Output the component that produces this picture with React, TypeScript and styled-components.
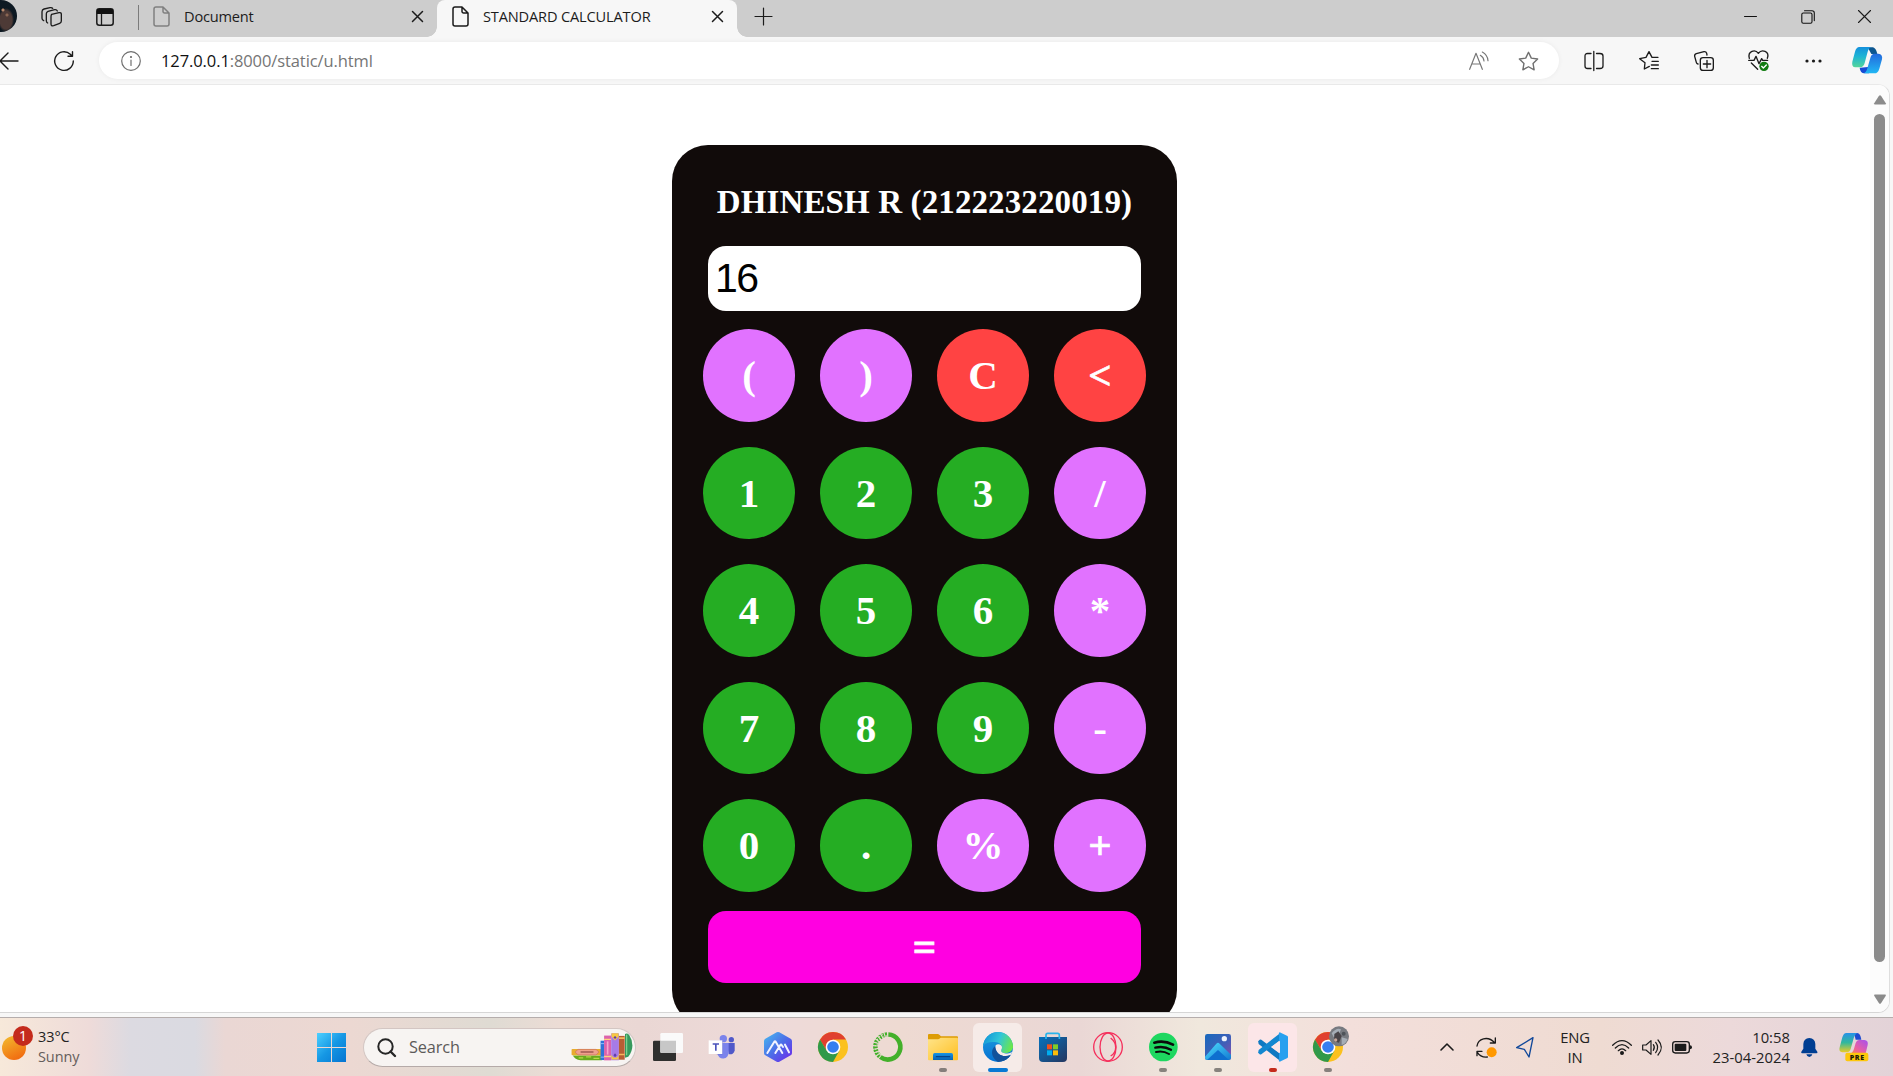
import React from "react";
import styled, { createGlobalStyle } from "styled-components";

const GlobalStyle = createGlobalStyle`
  *, *::before, *::after { box-sizing: border-box; }
  html, body { margin: 0; padding: 0; overflow: hidden; }
  svg { display: block; flex: none; overflow: visible; }
`;

const UI_FONT = `"Open Sans", "Noto Sans", sans-serif`;
const SERIF = `"Liberation Serif", "Times New Roman", serif`;

const Screen = styled.div`
  width: 1893px;
  height: 1076px;
  overflow: hidden;
  display: flex;
  flex-direction: column;
  background: #f7f7f7;
  font-family: ${UI_FONT};
`;

/* ---------- tab strip ---------- */
const TabStrip = styled.div`
  height: 37px;
  flex: none;
  display: flex;
  align-items: stretch;
  background: #cdcdcd;
`;

const Slot = styled.div<{ $w: number; $start?: boolean }>`
  width: ${(p) => p.$w}px;
  flex: none;
  display: flex;
  align-items: center;
  justify-content: ${(p) => (p.$start ? "flex-start" : "center")};
`;

const StripSlot = styled(Slot)`
  padding-bottom: 4px;
`;

const Avatar = styled.div`
  width: 32px;
  height: 32px;
  margin-left: -15px;
  flex: none;
  border-radius: 50%;
  background: radial-gradient(circle at 18px 10px, #b98a6c 0 1px, transparent 2px),
    radial-gradient(circle at 22px 15px, #8a6552 0 1px, transparent 2px),
    radial-gradient(ellipse 10px 15px at 21px 20px, #4d3a36 0 60%, transparent 80%),
    linear-gradient(#0e1a24, #0b1720);
`;

const Separator = styled.div`
  width: 1px;
  height: 25px;
  margin: 5px 14px 0 15px;
  background: #7b7b7b;
`;

const Tab = styled.div<{ $active?: boolean; $w: number }>`
  position: relative;
  width: ${(p) => p.$w}px;
  flex: none;
  display: flex;
  align-items: center;
  padding: 0 14px 4px ${(p) => (p.$active ? 15 : 0)}px;
  background: ${(p) => (p.$active ? "#f7f7f7" : "transparent")};
  border-radius: ${(p) => (p.$active ? "8px 8px 0 0" : "0")};
`;

const TabCorner = styled.span<{ $side: "left" | "right" }>`
  position: absolute;
  bottom: 0;
  ${(p) => p.$side}: -10px;
  width: 10px;
  height: 10px;
  background: radial-gradient(circle at ${(p) => (p.$side === "left" ? "0 0" : "10px 0")}, transparent 9.5px, #f7f7f7 10px);
`;

const TabTitle = styled.span<{ $ls: number }>`
  margin-left: 14px;
  padding-bottom: 2px;
  flex: 1;
  font-size: 14.6px;
  letter-spacing: ${(p) => p.$ls}px;
  white-space: nowrap;
  color: #1c1c1c;
`;

const Spacer = styled.div`
  flex: 1;
`;

/* ---------- toolbar ---------- */
const Toolbar = styled.div`
  height: 47px;
  flex: none;
  display: flex;
  align-items: center;
`;

const AddressBar = styled.div`
  width: 1460px;
  height: 37px;
  flex: none;
  display: flex;
  align-items: center;
  padding-left: 22px;
  padding-right: 7px;
  border-radius: 19px;
  background: #fff;
  box-shadow: 0 0 5px rgba(0, 0, 0, 0.06);
`;

const Url = styled.span`
  margin-left: 20px;
  font-size: 16.5px;
  letter-spacing: -0.1px;
  color: #757575;
  b {
    font-weight: 400;
    color: #111;
  }
`;

/* ---------- page ---------- */
const Viewport = styled.div`
  height: 929px;
  width: 1890px;
  flex: none;
  overflow: hidden;
  display: flex;
  background: #fff;
  border-top: 1px solid #e9e9e9;
  border-right: 1px solid #dedede;
  border-bottom: 1px solid #d6d6d6;
  border-radius: 0 12px 12px 0;
`;

const Page = styled.main`
  width: 1870px;
  flex: none;
  padding: 60px 0 0 672px;
`;

const Calculator = styled.section`
  width: 505px;
  height: 881px;
  padding: 38px 30px 0;
  border-radius: 36px;
  background: #110b0a;
  display: flex;
  flex-direction: column;
  align-items: center;
`;

const Heading = styled.h1`
  margin: 0;
  height: 38px;
  font: bold 33px/38px ${SERIF};
  letter-spacing: 0.12px;
  color: #fff;
  white-space: nowrap;
`;

const Display = styled.div`
  width: 433px;
  height: 65px;
  margin-top: 25px;
  padding-left: 7px;
  border-radius: 18px;
  background: #fff;
  font: 41px/65px "Liberation Sans", Arial, sans-serif;
  letter-spacing: -1.5px;
  color: #000;
`;

const Keys = styled.div`
  margin-top: 18px;
  display: grid;
  grid-template-columns: repeat(4, 92px);
  grid-auto-rows: 92.75px;
  gap: 24.75px 25px;
`;

const COLORS = { digit: "#25ad23", op: "#e172ff", edit: "#ff4343" };

const Key = styled.button<{ $kind: keyof typeof COLORS; $heavy?: boolean }>`
  border: 0;
  padding: 0;
  border-radius: 50%;
  background: ${(p) => COLORS[p.$kind]};
  color: #fff;
  font: bold 41px/92.75px ${SERIF};
  -webkit-text-stroke: ${(p) => (p.$heavy ? "0.6px #fff" : "0")};
`;

const EqualsKey = styled.button`
  width: 433px;
  height: 72px;
  margin-top: 19px;
  padding: 0;
  border: 0;
  border-radius: 18px;
  background: #ff00e1;
  color: #fff;
  font: bold 41px/72px ${SERIF};
  -webkit-text-stroke: 0.8px #fff;
`;

const Scrollbar = styled.div`
  width: 19px;
  flex: none;
  display: flex;
  flex-direction: column;
  align-items: center;
  padding: 10px 0 8px;
  background: #fcfcfc;
`;

const Thumb = styled.div`
  width: 11px;
  height: 848px;
  margin: 9px 0 auto;
  border-radius: 6px;
  background: #8b8b8b;
`;

/* ---------- taskbar ---------- */
const Taskbar = styled.footer`
  height: 59px;
  margin-top: 4px;
  flex: none;
  display: flex;
  align-items: center;
  border-top: 1px solid #b5adac;
  background: linear-gradient(90deg, #f7e9da 0, #eedbd9 90px, #dcdae1 130px, #dadae1 195px, #ead7d4 225px,
    #ecd8d2 350px, #dfdbd3 490px, #ecdcd5 560px, #ead7d4 640px, #eedad9 780px, #eedad2 900px, #ead7d5 1080px,
    #f0e8dd 1200px, #f3dfdb 1350px, #efdbd2 1600px, #ecd9da 1730px, #e3d3d8 1893px);
`;

const Weather = styled.div`
  width: 299px;
  flex: none;
  display: flex;
  align-items: center;
  gap: 4px;
`;

const WeatherText = styled.div`
  font-size: 14.5px;
  line-height: 20px;
  letter-spacing: -0.1px;
  color: #222;
  div + div {
    color: #655d5b;
  }
`;

const SearchBox = styled.div`
  width: 273px;
  height: 39px;
  margin: 0 4px 0 0;
  flex: none;
  display: flex;
  align-items: center;
  padding: 0 2px 0 13px;
  border: 1px solid #d3c6c3;
  border-bottom-color: #b5aaa8;
  border-radius: 20px;
  background: #f7f4f2;
`;

const SearchLabel = styled.span`
  margin-left: 13px;
  flex: 1;
  font-size: 16.3px;
  letter-spacing: -0.1px;
  color: #5c5a59;
`;

const AppTile = styled.div<{ $bg?: string }>`
  position: relative;
  width: 49px;
  height: 49px;
  margin: 0 3px;
  flex: none;
  display: flex;
  align-items: center;
  justify-content: center;
  border-radius: 6px;
  background: ${(p) => p.$bg ?? "transparent"};
`;

const Indicator = styled.i<{ $w: number; $c: string }>`
  position: absolute;
  bottom: 0;
  left: calc(50% - ${(p) => p.$w / 2}px);
  width: ${(p) => p.$w}px;
  height: 4px;
  border-radius: 2px;
  background: ${(p) => p.$c};
`;

const Language = styled.div`
  width: 64px;
  flex: none;
  text-align: center;
  font-size: 14.8px;
  line-height: 20px;
  letter-spacing: -0.2px;
  color: #222;
`;

const Clock = styled.div`
  width: 93px;
  flex: none;
  text-align: right;
  font-size: 14.8px;
  line-height: 20px;
  letter-spacing: 0.02px;
  color: #222;
  white-space: nowrap;
`;

const stroke = (c = "#1b1b1b", w = 1.3) => ({
  fill: "none",
  stroke: c,
  strokeWidth: w,
  strokeLinecap: "round" as const,
  strokeLinejoin: "round" as const,
});

const DocIcon = ({ color }: { color: string }) => (
  <svg width="17" height="21" viewBox="0 0 17 21" {...stroke(color, 1.5)}>
    <path d="M3 1h7l6 6v11a2 2 0 0 1-2 2H3a2 2 0 0 1-2-2V3a2 2 0 0 1 2-2zM10 1v4.500a1.500 1.500 0 0 0 1.500 1.500H16" />
  </svg>
);

const Cross = ({ s = 11, w = 1.5 }: { s?: number; w?: number }) => (
  <svg width={s} height={s} viewBox={`0 0 ${s} ${s}`} {...stroke("#1b1b1b", w)}>
    <path d={`M.5 .5L${s - 0.5} ${s - 0.5}M${s - 0.5} .5L.5 ${s - 0.5}`} />
  </svg>
);

const TeamsIcon = () => (
  <svg width="30" height="30" viewBox="0 0 90 90">
    <circle cx="70" cy="23" r="8" fill="#5059c9" />
    <path d="M56 33h24v22a13 13 0 0 1-18 11z" fill="#5059c9" />
    <circle cx="46" cy="20" r="11" fill="#7b83eb" />
    <path d="M26 33h36v28a17 17 0 0 1-34 3z" fill="#7b83eb" />
    <path d="M6 26h38v41H28L26 67z" fill="#4a52b5" opacity=".6" />
    <rect x="2" y="25" width="41" height="41" fill="#fff" />
    <path d="M14 36h19M23.500 36v20" stroke="#4b53bc" strokeWidth="5" />
  </svg>
);

const HexIcon = () => (
  <svg width="30" height="30" viewBox="0 0 90 90">
    <defs>
      <linearGradient id="hex" x1="0" y1="0" x2="1" y2="1">
        <stop offset="0" stopColor="#46bdf0" />
        <stop offset=".5" stopColor="#4c6ee8" />
        <stop offset="1" stopColor="#7024ea" />
      </linearGradient>
    </defs>
    <path d="M41 1q4-2 8 0l34 19q4 2 4 7v36q0 5-4 7L49 89q-4 2-8 0L7 70q-4-2-4-7V27q0-5 4-7z" fill="url(#hex)" />
    <path d="M13 63L34 29q2-3 4 0l20 34M37 63l15-24q2-3 4 0l4 6M66 38l12 23" {...stroke("#f1f3ff", 6)} />
  </svg>
);

const ChromeIcon = ({ badge }: { badge?: boolean }) => (
  <svg width="30" height="30" viewBox="0 0 90 90">
    <circle cx="45" cy="45" r="45" fill="#fbc11e" />
    <path d="M6 23A45 45 0 0 1 84 22.500H45L26 56z" fill="#e0402f" />
    <path d="M6 22.500A45 45 0 0 0 45 90L64 56 45 45 26 56z" fill="#30994a" />
    <circle cx="45" cy="45" r="22" fill="#fff" />
    <circle cx="45" cy="45" r="17.500" fill="#357ef0" />
    {badge && (
      <g>
        <circle cx="78" cy="13" r="30" fill="#777a80" />
        <path d="M56 4q14-18 28-12l-6 16-16 8zM86 16l18 5q-6 16-18 18z" fill="#a5adb6" />
        <path d="M64 6l12-8 10 14-8 20-15-4z" fill="#494448" />
        <circle cx="68" cy="24" r="5" fill="#c5a69b" />
        <circle cx="92" cy="5" r="6" fill="#4e5359" />
      </g>
    )}
  </svg>
);

const AnacondaIcon = () => (
  <svg width="30" height="30" viewBox="0 0 90 90" fill="none" stroke="#43b02a">
    <path d="M46 7.500A37.500 37.500 0 1 1 22 75" strokeWidth="14" />
    <path d="M20 73A37.500 37.500 0 0 1 43 7.500" strokeWidth="14" strokeDasharray="6 3" />
    <path d="M23 69A33 33 0 0 1 42 12" strokeWidth="4" stroke="#eedad8" strokeDasharray="4 6" />
    <path d="M12 62A40 40 0 0 1 30 7" strokeWidth="4" stroke="#eedad8" strokeDasharray="3 7" />
  </svg>
);

const FolderIcon = () => (
  <svg width="30" height="30" viewBox="0 0 90 90">
    <defs>
      <linearGradient id="fold" x1="0" y1="0" x2="1" y2="1">
        <stop offset="0" stopColor="#ffe48a" />
        <stop offset="1" stopColor="#ffbf21" />
      </linearGradient>
      <linearGradient id="foldb" x1="0" y1="0" x2="0" y2="1">
        <stop offset="0" stopColor="#1894e5" />
        <stop offset="1" stopColor="#0863b2" />
      </linearGradient>
    </defs>
    <path d="M0 9q0-3 3-3h26q3 0 5 2l5 5h48q3 0 3 4v17H0z" fill="#dd9c05" />
    <path d="M0 22h30q3 0 6-3l2-2h49q3 0 3 3v62q0 3-3 3H3q-3 0-3-3z" fill="url(#fold)" />
    <path d="M15 84V68q0-5 5-5h50q5 0 5 5v16z" fill="url(#foldb)" />
    <path d="M25 74h40" stroke="#06458a" strokeWidth="4" strokeLinecap="round" />
  </svg>
);

const EdgeIcon = () => (
  <svg width="30" height="30" viewBox="0 0 90 90">
    <defs>
      <linearGradient id="eg1" x1="0" y1=".3" x2="1" y2=".6">
        <stop offset="0" stopColor="#1296d8" />
        <stop offset=".5" stopColor="#31c6d8" />
        <stop offset="1" stopColor="#6de846" />
      </linearGradient>
      <linearGradient id="eg2" x1="0" y1="0" x2="0" y2="1">
        <stop offset="0" stopColor="#1c9cde" />
        <stop offset="1" stopColor="#0671d2" />
      </linearGradient>
      <clipPath id="egc"><circle cx="45" cy="45" r="45" /></clipPath>
    </defs>
    <g clipPath="url(#egc)">
      <rect width="90" height="90" fill="url(#eg2)" />
      <path d="M36 43C20 55 26 84 52 92h44V66c-14 8-34 6-43-4-8-8-10-14-17-19z" fill="#12529b" />
      <path d="M0 36C6 8 28 0 45 0c27 0 46 20 46 40 0 14-11 23-24 23-10 0-15-4-12-9 7-12-4-23-20-24C20 29 6 32 0 42z" fill="url(#eg1)" />
      <path d="M38 40c7-7 20-2 19 7-1 6-5 9 0 14 6 5 18 5 33-2v10l-8 1c-14 5-30 2-38-8-6-7-8-15-6-22z" fill="#f6ebe9" />
      <path d="M38 40c-3 9 0 19 8 25 10 8 24 9 38 3l-4 10-24 4-22-20z" fill="#12529b" />
    </g>
  </svg>
);

const StoreIcon = () => (
  <svg width="30" height="30" viewBox="0 0 90 90">
    <defs>
      <linearGradient id="store" x1="0" y1="0" x2="1" y2="1">
        <stop offset="0" stopColor="#0672bd" />
        <stop offset="1" stopColor="#25365f" />
      </linearGradient>
    </defs>
    <path d="M24 22V9q0-5 5-5h30q5 0 5 5v13" fill="none" stroke="#28b4eb" strokeWidth="5" />
    <path d="M3 15h84v63q0 12-12 12H15Q3 90 3 78z" fill="url(#store)" />
    <path d="M24 14v7M64 14v7" stroke="#28b4eb" strokeWidth="5" />
    <path d="M27 37h15v15H27z" fill="#f1511b" />
    <path d="M45 37h15v15H45z" fill="#80cc28" />
    <path d="M27 55h15v15H27z" fill="#00adef" />
    <path d="M45 55h15v15H45z" fill="#fbbc09" />
  </svg>
);

const OperaIcon = () => (
  <svg width="30" height="30" viewBox="0 0 90 90" fill="none" stroke="#f5305c" strokeWidth="4">
    <circle cx="45" cy="45" r="43" />
    <ellipse cx="45" cy="45" rx="24" ry="42" />
    <path d="M53 18c20 16 20 41 0 54" />
  </svg>
);

const SpotifyIcon = () => (
  <svg width="30" height="30" viewBox="0 0 90 90">
    <circle cx="46" cy="45" r="43" fill="#1ed760" />
    <g {...stroke("#0b0b0b", 7)}>
      <path d="M19 32q29-8 56 6" strokeWidth="8" />
      <path d="M22 47q25-6 47 6" />
      <path d="M24 60q21-5 39 6" strokeWidth="6" />
    </g>
  </svg>
);

const PhotosIcon = () => (
  <svg width="30" height="30" viewBox="0 0 90 90">
    <defs>
      <linearGradient id="ph" x1="0" y1="0" x2="1" y2="1">
        <stop offset="0" stopColor="#1769bd" />
        <stop offset=".55" stopColor="#3f5fb8" />
        <stop offset="1" stopColor="#8c4cac" />
      </linearGradient>
      <linearGradient id="ph2" x1="0" y1="0" x2="1" y2="1">
        <stop offset="0" stopColor="#4edfff" />
        <stop offset="1" stopColor="#0e72ce" />
      </linearGradient>
      <clipPath id="phc"><rect x="6" y="6" width="78" height="78" rx="7" /></clipPath>
    </defs>
    <g clipPath="url(#phc)">
      <rect x="6" y="6" width="78" height="78" fill="url(#ph)" />
      <path d="M6 74L40 35q5-5 10 0l36 35v20H6z" fill="url(#ph2)" />
      <path d="M12 84l33-30 33 30z" fill="#0e6fcf" />
    </g>
    <circle cx="64" cy="20" r="8" fill="#eef2fb" />
  </svg>
);

const CodeIcon = () => (
  <svg width="30" height="30" viewBox="0 0 90 90">
    <path d="M1 31q-2-3 1-5l3-3q2-1 5 0l58 44v21L2 36z" fill="#0f79c2" />
    <path d="M1 59q-2 3 1 5l3 3q2 1 5 0l58-44V2L2 54z" fill="#1387d0" />
    <path d="M65 1l22 10q3 1 3 5v58q0 4-3 5L65 89q-4-1-2-6V7q-2-4 2-6z" fill="#27a0ef" />
    <path d="M66 26v38L40 45z" fill="#fce6e8" />
  </svg>
);

const TaskViewIcon = () => (
  <svg width="30" height="30" viewBox="0 0 90 90">
    <rect x="0" y="26" width="69" height="61" rx="4" fill="#2f2f2e" />
    <rect x="22" y="3" width="68" height="60" rx="4" fill="#fafafa" />
    <path d="M22 26h47v37H26q-4 0-4-4z" fill="#c7c7c7" />
  </svg>
);

const BooksIcon = () => (
  <svg width="62" height="28" viewBox="0 0 189 87">
    <path d="M4 70h90v15H28Q10 82 4 70z" fill="#69a91e" />
    <path d="M22 77h14M45 74h16M68 79h18" stroke="#b7d947" strokeWidth="4" />
    <rect x="0" y="50" width="92" height="19" rx="2" fill="#e8ac2f" />
    <path d="M20 51h56l9 8-9 9H20l-9-9z" fill="#efa08c" stroke="#ca6d5d" strokeWidth="2" />
    <path d="M28 59h40" stroke="#a65c55" strokeWidth="5" />
    <rect x="90" y="24" width="12" height="60" fill="#2f73d7" />
    <path d="M90 33h12M90 75h12" stroke="#8dc0ff" strokeWidth="3" />
    <rect x="101" y="8" width="22" height="77" fill="#dc62ac" />
    <path d="M101 20h22M101 73h22" stroke="#ffd37d" strokeWidth="4" />
    <path d="M112 26v41" stroke="#f6a6cf" strokeWidth="5" />
    <rect x="123" y="1" width="24" height="84" rx="2" fill="#a67be7" />
    <path d="M124 1h22v10l-11 12-11-12zM124 82V67l5 9h12l5-9v15z" fill="#f7c842" />
    <path d="M135 9l5 5-5 5-5-5zM135 63l5 6-5 6-5-6z" fill="#613da9" />
    <rect x="147" y="9" width="18" height="74" fill="#b85d34" />
    <path d="M147 16h18M147 67h18" stroke="#f4b85c" strokeWidth="5" />
    <path d="M166 3q6-4 13 3 10 15 10 33 0 19-13 35l-10 3z" fill="#369a5d" />
    <path d="M171 5v64" stroke="#7bd090" strokeWidth="4" />
  </svg>
);

const CopilotIcon = () => (
  <svg width="30" height="27" viewBox="0 0 90 81">
    <defs>
      <linearGradient id="cpa" x1="0" y1="0" x2="0" y2="1">
        <stop offset="0" stopColor="#1590dc" />
        <stop offset=".45" stopColor="#1db4d5" />
        <stop offset="1" stopColor="#55d69a" />
      </linearGradient>
      <linearGradient id="cpb" x1="0" y1="0" x2="0" y2="1">
        <stop offset="0" stopColor="#2369dc" />
        <stop offset="1" stopColor="#21b7f4" />
      </linearGradient>
    </defs>
    <path d="M47 1h16q9 2 13 20H58z" fill="#0d568f" />
    <path d="M25 62l23-2 3 19H37q-12 0-14-17z" fill="#164bd4" />
    <path d="M22 0h36q-8 2-12 18l-8 30q-3 12-13 13H10Q-2 60 1 44L9 14Q13 0 22 0z" fill="url(#cpa)" />
    <path d="M66 20h13q14 2 11 17l-8 28q-4 14-15 14H34q9-1 12-15l9-31q3-12 11-13z" fill="url(#cpb)" />
  </svg>
);

const CopilotPreIcon = () => (
  <svg width="30" height="29" viewBox="0 0 90 87">
    <defs>
      <linearGradient id="pa" x1="0" y1="0" x2="0" y2="1">
        <stop offset="0" stopColor="#2792e8" />
        <stop offset=".5" stopColor="#32b89c" />
        <stop offset="1" stopColor="#edcc25" />
      </linearGradient>
      <linearGradient id="pb" x1="1" y1="0" x2="0" y2="1">
        <stop offset="0" stopColor="#a551f0" />
        <stop offset=".6" stopColor="#e85fa4" />
        <stop offset="1" stopColor="#f78258" />
      </linearGradient>
    </defs>
    <path d="M45 0h10q9 1 12 20H50z" fill="#1e4bd1" />
    <path d="M22 0h34q-8 2-12 16l-9 32q-3 10-12 10H10Q-2 57 2 43l8-30Q14 0 22 0z" fill="url(#pa)" />
    <path d="M60 21h16q13 2 10 15l-6 25H34q7-1 11-14l5-17q3-9 10-9z" fill="url(#pb)" />
    <rect x="19" y="59" width="69" height="26" rx="6" fill="#fdc70b" />
    <text x="54.500" y="79.500" textAnchor="middle" fontFamily="Open Sans" fontWeight="800" fontSize="21" letterSpacing="2" fill="#201a08">PRE</text>
  </svg>
);

const KEYS: [string, keyof typeof COLORS][] = [
  ["(", "op"], [")", "op"], ["C", "edit"], ["<", "edit"],
  ["1", "digit"], ["2", "digit"], ["3", "digit"], ["/", "op"],
  ["4", "digit"], ["5", "digit"], ["6", "digit"], ["*", "op"],
  ["7", "digit"], ["8", "digit"], ["9", "digit"], ["-", "op"],
  ["0", "digit"], [".", "digit"], ["%", "op"], ["+", "op"],
];

const APPS: { icon: React.ReactNode; bg?: string; dot?: [number, string] }[] = [
  { icon: <TaskViewIcon /> },
  { icon: <TeamsIcon /> },
  { icon: <HexIcon /> },
  { icon: <ChromeIcon /> },
  { icon: <AnacondaIcon /> },
  { icon: <FolderIcon />, dot: [8, "#857e7b"] },
  { icon: <EdgeIcon />, bg: "#f6ebe8", dot: [20, "#0879d4"] },
  { icon: <StoreIcon /> },
  { icon: <OperaIcon /> },
  { icon: <SpotifyIcon />, dot: [8, "#87827d"] },
  { icon: <PhotosIcon />, dot: [8, "#87827d"] },
  { icon: <CodeIcon />, bg: "#fce6e8", dot: [8, "#c42b1c"] },
  { icon: <ChromeIcon badge />, dot: [8, "#87807d"] },
];

const BrowserTabs = () => (
  <TabStrip>
    <Avatar />
    <StripSlot $w={69}>
      <svg width="22" height="20" viewBox="0 0 66 60" {...stroke("#1b1b1b", 4)}>
        <path d="M32 22l22-5q7-1 7 5v20q0 5-5 7l-18 7q-8 2-8-5V29q0-5 2-7z" />
        <path d="M20 48q-4-2-4-7V20q0-5 5-7l20-5q6-1 8 4M8 41q-5-2-5-7V14q0-6 6-8l18-4q6-1 8 2" />
      </svg>
    </StripSlot>
    <StripSlot $w={37}>
      <svg width="18" height="18" viewBox="0 0 18 18">
        <rect x=".8" y=".8" width="16.400" height="16.400" rx="2.500" {...stroke("#1b1b1b", 1.5)} />
        <path d="M1 1h16v5H1z" fill="#111" />
        <path d="M5.500 6v11" stroke="#1b1b1b" strokeWidth="1.300" />
      </svg>
    </StripSlot>
    <Separator />
    <Tab $w={284}>
      <DocIcon color="#808080" />
      <TabTitle $ls={-0.2}>Document</TabTitle>
      <Cross />
    </Tab>
    <Tab $active $w={300}>
      <TabCorner $side="left" />
      <DocIcon color="#1b1b1b" />
      <TabTitle $ls={-0.16}>STANDARD CALCULATOR</TabTitle>
      <Cross />
      <TabCorner $side="right" />
    </Tab>
    <StripSlot $w={53}>
      <svg width="17" height="17" viewBox="0 0 17 17" {...stroke("#1b1b1b", 1.2)}>
        <path d="M8.500 0v17M0 8.500h17" />
      </svg>
    </StripSlot>
    <Spacer />
    <StripSlot $w={57}>
      <svg width="13" height="13" viewBox="0 0 13 13" {...stroke("#111", 1)}><path d="M.5 6.500h12" /></svg>
    </StripSlot>
    <StripSlot $w={57}>
      <svg width="14" height="14" viewBox="0 0 14 14" {...stroke("#111", 1.1)}>
        <rect x=".8" y="3" width="10.200" height="10.200" rx="1.500" />
        <path d="M3.500.8h7.500a2.300 2.300 0 0 1 2.300 2.300v7.500" />
      </svg>
    </StripSlot>
    <StripSlot $w={57}><Cross s={13} w={1.1} /></StripSlot>
  </TabStrip>
);

const BrowserToolbar = () => (
  <Toolbar>
    <Slot $w={29} $start>
      <svg width="19" height="18" viewBox="0 0 19 18" {...stroke("#1b1b1b", 1.4)}>
        <path d="M18 9H0M8 1L0 9l8 8" />
      </svg>
    </Slot>
    <Slot $w={70}>
      <svg width="20" height="20" viewBox="0 0 20 20" {...stroke("#1b1b1b", 1.4)}>
        <path d="M19.300 10a9.300 9.300 0 1 1-3-6.800L18 5M18.500 .7V5.300H14" />
      </svg>
    </Slot>
    <AddressBar>
      <svg width="20" height="20" viewBox="0 0 20 20" {...stroke("#6f6f6f", 1.2)}>
        <circle cx="10" cy="10" r="9.300" />
        <path d="M10 9v5.500" />
        <circle cx="10" cy="6" r=".5" fill="#6f6f6f" />
      </svg>
      <Url><b>127.0.0.1</b>:8000/static/u.html</Url>
      <Spacer />
      <Slot $w={50}>
        <svg width="20" height="19" viewBox="0 0 60 57" {...stroke("#767676", 3.5)}>
          <path d="M2 55L21 7l19 48M9 39h24M34 13q10 6 11 17M40 3q16 9 17 26" />
        </svg>
      </Slot>
      <Slot $w={48}>
        <svg width="21" height="20" viewBox="0 0 24 23" {...stroke("#6f6f6f", 1.6)}>
          <path d="M12 1.500l3.200 6.700 7.300 1-5.300 5.100 1.300 7.300L12 18.100l-6.500 3.500 1.300-7.300L1.500 9.200l7.300-1z" />
        </svg>
      </Slot>
    </AddressBar>
    <Slot $w={7} />
    <Slot $w={55}>
      <svg width="20" height="20" viewBox="0 0 20 20" {...stroke()}>
        <path d="M7 2.500H3.500Q1 2.500 1 5v10q0 2.500 2.500 2.500H7M12.500 2.500H16Q19 2.500 19 5v10q0 2.500-3 2.500h-3.500M9.800 .5v19" />
      </svg>
    </Slot>
    <Slot $w={55}>
      <svg width="20" height="19" viewBox="0 0 60 57" {...stroke("#1b1b1b", 4)}>
        <path d="M31 46L16 54l2-19L2 23l19-4 9-17 9 17h18M39 31h19M37 42h21M37 53h21" />
      </svg>
    </Slot>
    <Slot $w={55}>
      <svg width="20" height="20" viewBox="0 0 60 60" {...stroke("#1b1b1b", 4)}>
        <path d="M12 39q-4-1-5-5L2 16q-1-6 5-8l23-6q6-1 8 5l1 5" />
        <rect x="19" y="20" width="39" height="38" rx="8" />
        <path d="M39 28v22M28 39h22" />
      </svg>
    </Slot>
    <Slot $w={55}>
      <svg width="21" height="21" viewBox="0 0 63 63" {...stroke("#1b1b1b", 4)}>
        <path d="M4 25C-2 2 22-3 31 10 41-3 66 3 58 25M2 31h16l6-12 9 22 8-15 3 5h15M10 39l19 19" />
        <circle cx="48" cy="49" r="14" fill="#107c10" stroke="none" />
        <path d="M41 49l5 5 9-9" stroke="#fff" />
      </svg>
    </Slot>
    <Slot $w={55}>
      <svg width="17" height="4" viewBox="0 0 17 4" fill="#1b1b1b">
        <circle cx="2" cy="2" r="1.600" /><circle cx="8.500" cy="2" r="1.600" /><circle cx="15" cy="2" r="1.600" />
      </svg>
    </Slot>
    <Slot $w={51}><CopilotIcon /></Slot>
  </Toolbar>
);

export default function App() {
  return (
    <Screen>
      <GlobalStyle />
      <BrowserTabs />
      <BrowserToolbar />
      <Viewport>
        <Page>
          <Calculator>
            <Heading>DHINESH R (212223220019)</Heading>
            <Display>16</Display>
            <Keys>
              {KEYS.map(([label, kind]) => (
                <Key key={label} $kind={kind} $heavy={label === "<" || label === "+"}>{label}</Key>
              ))}
            </Keys>
            <EqualsKey>=</EqualsKey>
          </Calculator>
        </Page>
        <Scrollbar>
          <svg width="12" height="10" viewBox="0 0 12 10"><path d="M5 .8q1-1 2 0l4.800 7.500q.4 1.200-.8 1.200H1Q-.2 9.500.2 8.300z" fill="#8b8b8b" /></svg>
          <Thumb />
          <svg width="12" height="10" viewBox="0 0 12 10"><path d="M5 9.200q1 1 2 0l4.800-7.500Q12.200.5 11 .5H1Q-.2.5.2 1.700z" fill="#8b8b8b" /></svg>
        </Scrollbar>
      </Viewport>
      <Taskbar>
        <Weather>
          <svg width="34" height="34" viewBox="0 0 34 34">
            <defs>
              <linearGradient id="sun" x1=".2" y1="0" x2=".7" y2="1">
                <stop offset="0" stopColor="#f3b72d" />
                <stop offset="1" stopColor="#f1690f" />
              </linearGradient>
            </defs>
            <circle cx="14" cy="18" r="12" fill="url(#sun)" />
            <circle cx="23" cy="6" r="10" fill="#c42b1c" />
            <text x="23" y="11" textAnchor="middle" fontFamily="Open Sans" fontSize="14" fill="#fff">1</text>
          </svg>
          <WeatherText>
            <div>33°C</div>
            <div>Sunny</div>
          </WeatherText>
        </Weather>
        <Slot $w={64}>
          <svg width="29" height="29" viewBox="0 0 29 29">
            <defs>
              <linearGradient id="win" gradientUnits="userSpaceOnUse" x1="0" y1="0" x2="29" y2="29">
                <stop offset="0" stopColor="#4dd0ff" />
                <stop offset=".5" stopColor="#1597e4" />
                <stop offset="1" stopColor="#0574d1" />
              </linearGradient>
            </defs>
            <path d="M0 0h14v14H0zM15 0h14v14H15zM0 15h14v14H0zM15 15h14v14H15z" fill="url(#win)" />
          </svg>
        </Slot>
        <SearchBox>
          <svg width="19" height="19" viewBox="0 0 19 19" {...stroke("#262626", 2)}>
            <circle cx="8.500" cy="8.500" r="7.200" />
            <path d="M13.500 13.500l4.500 4.500" strokeWidth="2.400" />
          </svg>
          <SearchLabel>Search</SearchLabel>
          <BooksIcon />
        </SearchBox>
        {APPS.map((app, i) => (
          <AppTile key={i} $bg={app.bg}>
            {app.icon}
            {app.dot && <Indicator $w={app.dot[0]} $c={app.dot[1]} />}
          </AppTile>
        ))}
        <Spacer />
        <Slot $w={38}>
          <svg width="14" height="8" viewBox="0 0 14 8" {...stroke("#1b1b1b", 1.6)}><path d="M1 7l6-6 6 6" /></svg>
        </Slot>
        <Slot $w={41}>
          <svg width="21" height="21" viewBox="0 0 63 63" {...stroke("#1b1b1b", 4)}>
            <path d="M3 27C6 6 34-6 56 17M58 3v15H43M3 56V43h15M4 46q10 16 30 14" />
            <circle cx="47" cy="46" r="15" fill="#ff9800" stroke="none" />
          </svg>
        </Slot>
        <Slot $w={36}>
          <svg width="18" height="21" viewBox="0 0 54 63" {...stroke("#11489a", 4)}>
            <path d="M51 2L2 32l23 5 14 23z" />
          </svg>
        </Slot>
        <Language>ENG<br />IN</Language>
        <Slot $w={30}>
          <svg width="20" height="15" viewBox="0 0 60 45" {...stroke("#1b1b1b", 4)}>
            <path d="M2 16q28-28 56 0M10 24q20-20 40 0M19 32q11-11 22 0" />
            <circle cx="30" cy="39" r="4" fill="#1b1b1b" />
          </svg>
        </Slot>
        <Slot $w={30}>
          <svg width="20" height="17" viewBox="0 0 60 51" {...stroke("#1b1b1b", 3.6)}>
            <path d="M2 18h10L27 5v41L12 33H2zM34 17q6 8 0 17M41 10q12 15 0 31M48 3q20 22 0 45" />
          </svg>
        </Slot>
        <Slot $w={30}>
          <svg width="20" height="13" viewBox="0 0 60 39">
            <rect x="2" y="2" width="50" height="34" rx="8" {...stroke("#1b1b1b", 4)} />
            <rect x="8" y="8" width="35" height="22" rx="3" fill="#1b1b1b" />
            <path d="M54 13q6 0 6 6t-6 6z" fill="#1b1b1b" />
          </svg>
        </Slot>
        <Clock>10:58<br />23-04-2024</Clock>
        <Slot $w={38}>
          <svg width="17" height="19" viewBox="0 0 51 57" fill="#003e92">
            <path d="M25 0Q42 1 43 18v14l6 9q2 5-3 5H4q-5 0-3-5l6-9V18Q8 1 25 0zM16 49h18q-2 8-9 8t-9-8z" />
          </svg>
        </Slot>
        <Slot $w={52}><CopilotPreIcon /></Slot>
        <Slot $w={13} />
      </Taskbar>
    </Screen>
  );
}
